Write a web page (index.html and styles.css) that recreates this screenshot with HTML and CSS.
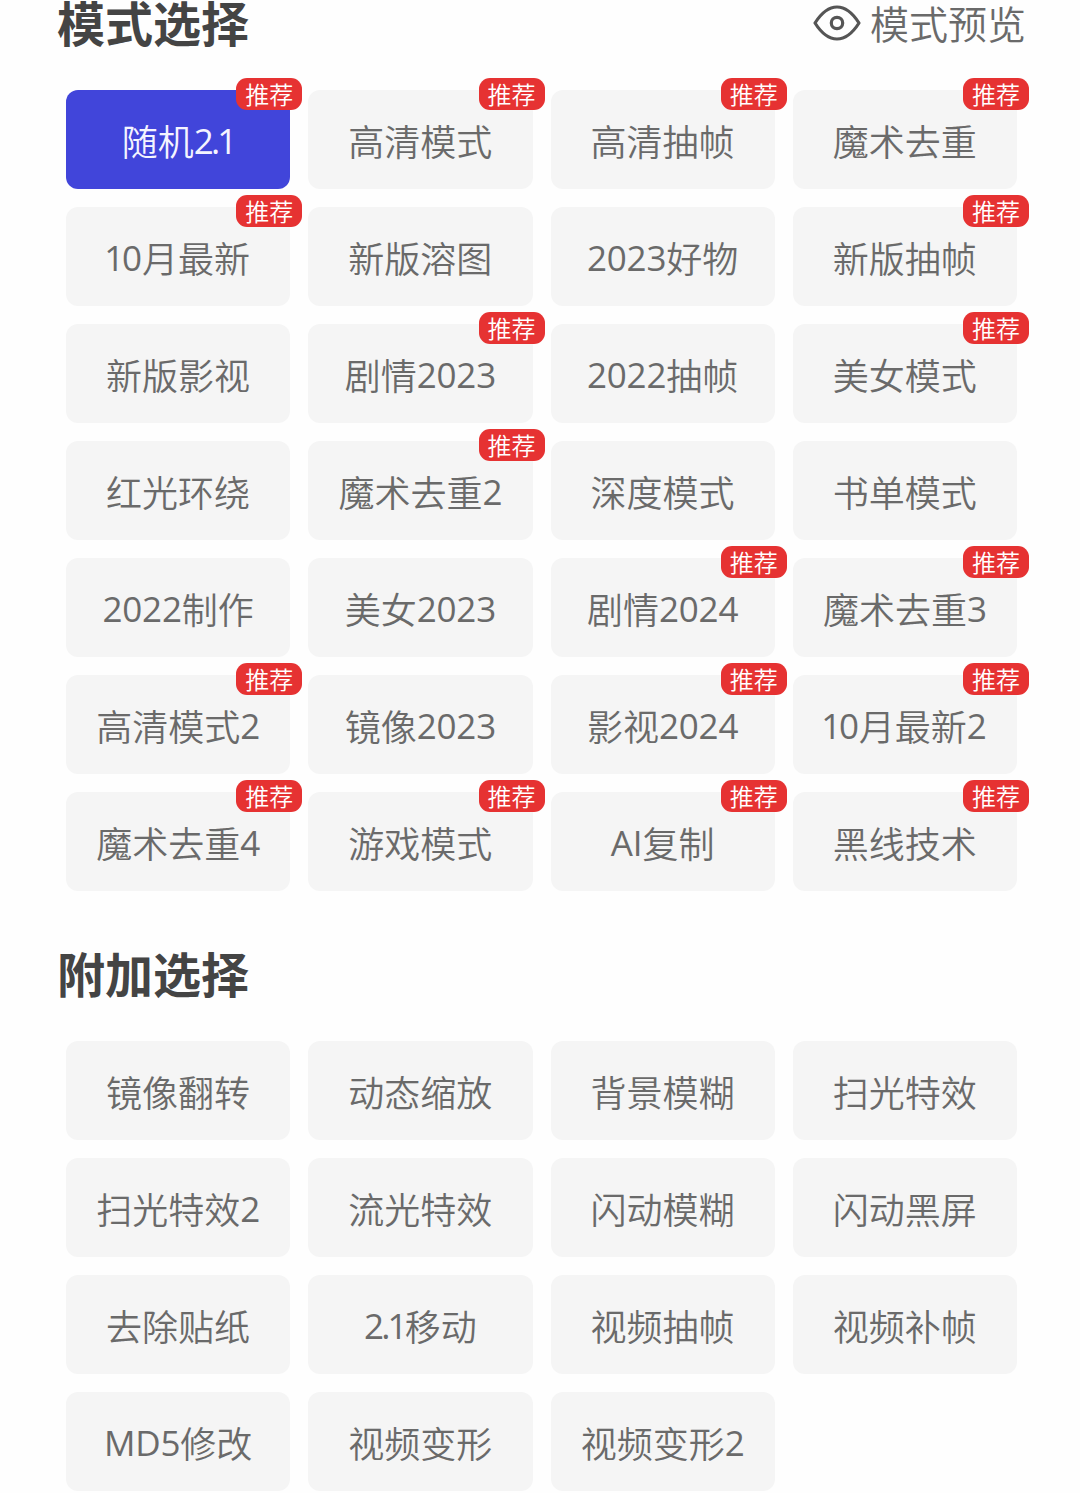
FILE: index.html
```html
<!DOCTYPE html>
<html lang="zh-CN">
<head>
<meta charset="utf-8">
<title>模式选择</title>
<link rel="stylesheet" href="styles.css">
</head>
<body>
<main class="page">
  <section class="section">
    <header class="section-head">
      <h2 class="title">模式选择</h2>
      <a class="preview">
        <svg class="eye" viewBox="0 0 48 36" fill="none" stroke="currentColor" stroke-width="3.2" stroke-linejoin="round"><path d="M2 18C9 7 16 2 24 2S39 7 46 18C39 29 32 34 24 34S9 29 2 18Z"/><circle cx="24" cy="18" r="5.7"/></svg>
        <span>模式预览</span>
      </a>
    </header>
    <div class="grid">
      <button class="tile active">随机<span class="latin tight">2.1</span><i class="badge">推荐</i></button>
      <button class="tile">高清模式<i class="badge">推荐</i></button>
      <button class="tile">高清抽帧<i class="badge">推荐</i></button>
      <button class="tile">魔术去重<i class="badge">推荐</i></button>
      <button class="tile"><span class="latin"><span class="one">1</span>0</span>月最新<i class="badge">推荐</i></button>
      <button class="tile">新版溶图</button>
      <button class="tile"><span class="latin">2023</span>好物</button>
      <button class="tile">新版抽帧<i class="badge">推荐</i></button>
      <button class="tile">新版影视</button>
      <button class="tile">剧情<span class="latin">2023</span><i class="badge">推荐</i></button>
      <button class="tile"><span class="latin">2022</span>抽帧</button>
      <button class="tile">美女模式<i class="badge">推荐</i></button>
      <button class="tile">红光环绕</button>
      <button class="tile">魔术去重<span class="latin">2</span><i class="badge">推荐</i></button>
      <button class="tile">深度模式</button>
      <button class="tile">书单模式</button>
      <button class="tile"><span class="latin">2022</span>制作</button>
      <button class="tile">美女<span class="latin">2023</span></button>
      <button class="tile">剧情<span class="latin">2024</span><i class="badge">推荐</i></button>
      <button class="tile">魔术去重<span class="latin">3</span><i class="badge">推荐</i></button>
      <button class="tile">高清模式<span class="latin">2</span><i class="badge">推荐</i></button>
      <button class="tile">镜像<span class="latin">2023</span></button>
      <button class="tile">影视<span class="latin">2024</span><i class="badge">推荐</i></button>
      <button class="tile"><span class="latin"><span class="one">1</span>0</span>月最新<span class="latin">2</span><i class="badge">推荐</i></button>
      <button class="tile">魔术去重<span class="latin">4</span><i class="badge">推荐</i></button>
      <button class="tile">游戏模式<i class="badge">推荐</i></button>
      <button class="tile"><span class="latin">AI</span>复制<i class="badge">推荐</i></button>
      <button class="tile">黑线技术<i class="badge">推荐</i></button>
    </div>
  </section>
  <section class="section">
    <header class="section-head">
      <h2 class="title">附加选择</h2>
    </header>
    <div class="grid">
      <button class="tile">镜像翻转</button>
      <button class="tile">动态缩放</button>
      <button class="tile">背景模糊</button>
      <button class="tile">扫光特效</button>
      <button class="tile">扫光特效<span class="latin">2</span></button>
      <button class="tile">流光特效</button>
      <button class="tile">闪动模糊</button>
      <button class="tile">闪动黑屏</button>
      <button class="tile">去除贴纸</button>
      <button class="tile"><span class="latin tight">2.1</span>移动</button>
      <button class="tile">视频抽帧</button>
      <button class="tile">视频补帧</button>
      <button class="tile"><span class="latin">MD5</span>修改</button>
      <button class="tile">视频变形</button>
      <button class="tile">视频变形<span class="latin">2</span></button>
    </div>
  </section>
</main>
</body>
</html>
```
FILE: styles.css
```css
* { box-sizing: border-box; }

body {
  margin: 0;
  background: #fefefe;
  color: #6a6a6a;
  font-family: "Noto Sans CJK SC", sans-serif;
}

.page {
  height: 1493px;
  overflow: hidden;
  display: flex;
  flex-direction: column;
  gap: 60px;
}

.section-head {
  height: 90px;
  padding: 0 54px 0 57px;
  display: flex;
  justify-content: space-between;
  align-items: flex-start;
}

.title {
  margin: 0;
  font-size: 48px;
  font-weight: 700;
  line-height: 43px;
  color: #444;
}

.preview {
  display: flex;
  align-items: center;
  gap: 9px;
  height: 44px;
  font-size: 39px;
  font-weight: 350;
  line-height: 44px;
}

.eye {
  width: 48px;
  height: 36px;
  margin-top: 1px;
  color: #555;
}

.grid {
  display: grid;
  grid-template-columns: repeat(4, 1fr);
  grid-auto-rows: 99px;
  gap: 18px;
  padding: 0 63px 0 66px;
}

.tile {
  position: relative;
  display: flex;
  justify-content: center;
  align-items: center;
  border: 0;
  padding: 0;
  border-radius: 12px;
  background: #f5f5f5;
  color: #6a6a6a;
  font: 350 36px/48px "Noto Sans CJK SC", sans-serif;
}

.tile.active {
  background: #4145da;
  color: #f4f4ff;
}

.latin {
  font-family: "Open Sans", "Noto Sans", sans-serif;
  font-size: 35px;
  font-weight: 400;
  letter-spacing: -0.2px;
  padding-top: 2px;
}

.tight { letter-spacing: -2.8px; }

.one { margin: 0 -2px; }

.badge {
  position: absolute;
  top: -12px;
  right: -12px;
  width: 66px;
  height: 32px;
  border-radius: 11px;
  background: #e63232;
  color: #fff;
  font-size: 24px;
  font-weight: 350;
  font-style: normal;
  line-height: 31px;
  text-align: center;
}
```
